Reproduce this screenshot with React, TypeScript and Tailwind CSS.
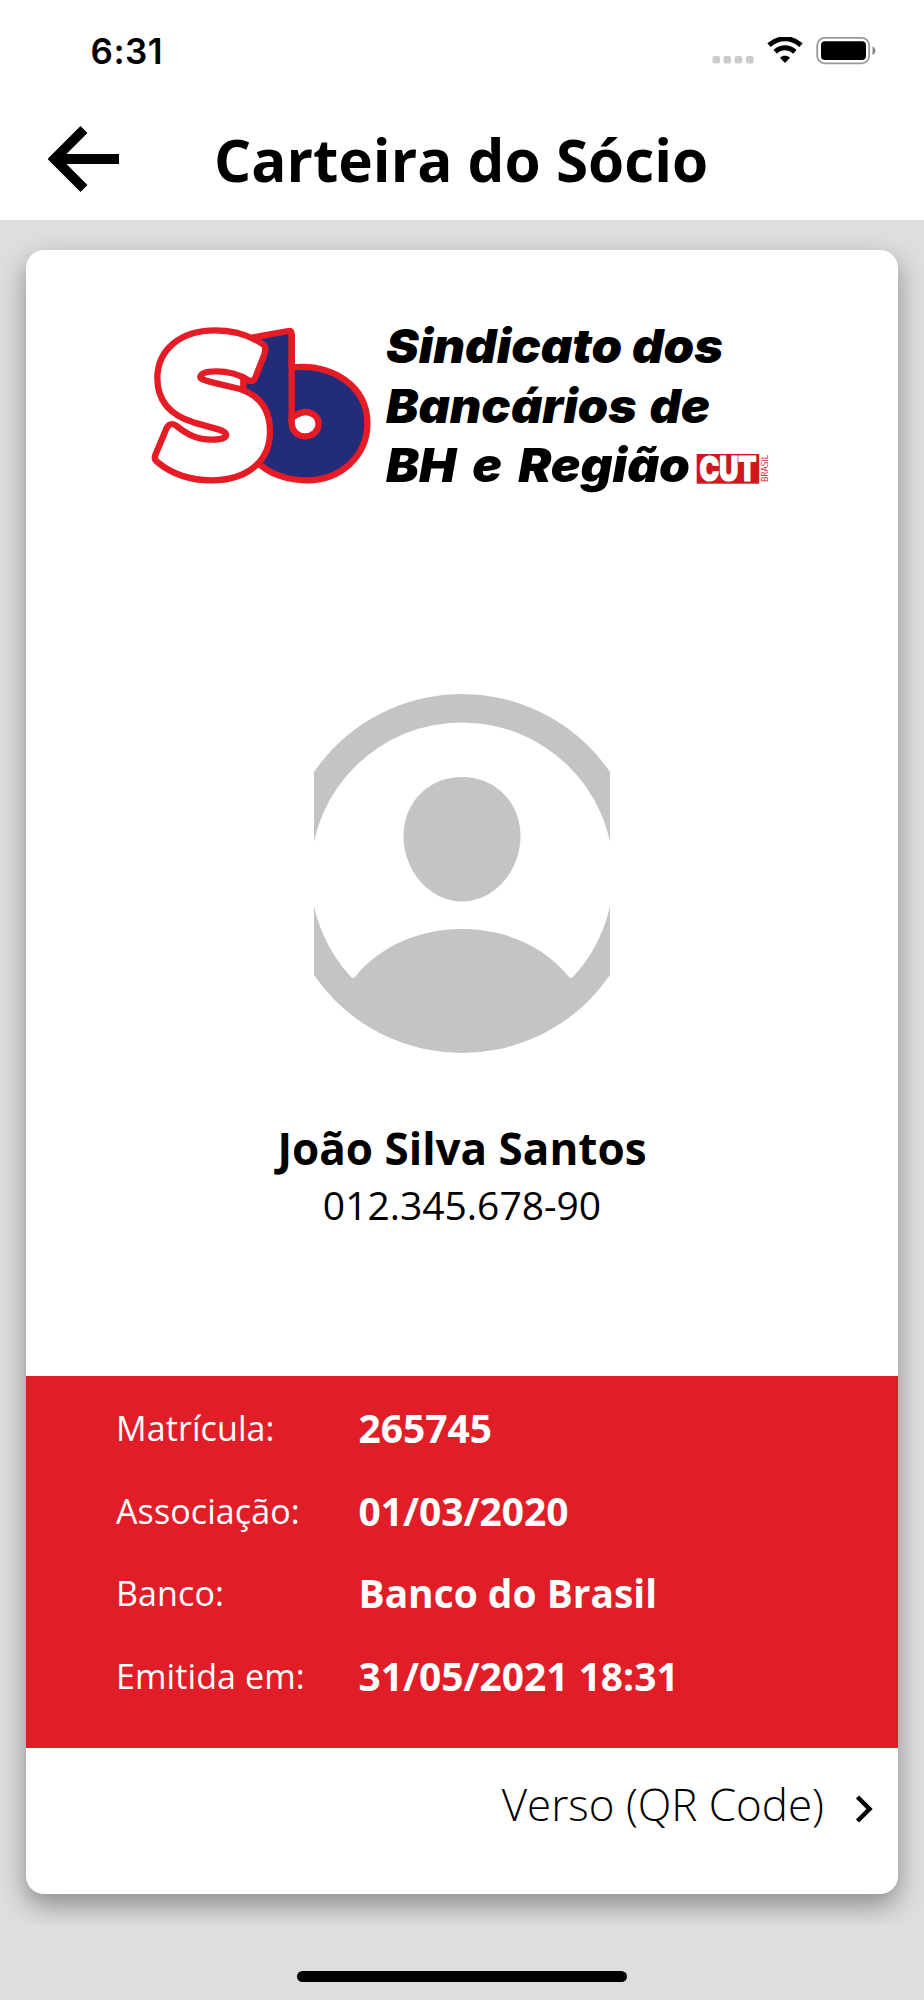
interface Field {
  label: string;
  value: string;
}

const fields: Field[] = [
  { label: 'Matrícula:', value: '265745' },
  { label: 'Associação:', value: '01/03/2020' },
  { label: 'Banco:', value: 'Banco do Brasil' },
  { label: 'Emitida em:', value: '31/05/2021 18:31' },
];

function StatusBar() {
  return (
    <div className="flex h-[100px] items-center justify-between pl-[90.5px] pr-[48px]">
      <span className="pt-px font-['Inter',sans-serif] text-[35px] leading-[40px] font-semibold tracking-[0.5px]">6:31</span>
      <svg width="164" height="28" viewBox="0 0 164 28" className="mt-[2px]">
        <g fill="#cbcbcb">
          <rect x="0.5" y="19" width="7.5" height="7.5" rx="2" />
          <rect x="11.5" y="19" width="7.5" height="7.5" rx="2" />
          <rect x="22.7" y="19" width="7.5" height="7.5" rx="2" />
          <rect x="34" y="19" width="7.5" height="7.5" rx="2" />
        </g>
        <g fill="none" stroke="#000" strokeWidth="5">
          <path d="M57 8.2C66.500 -0.400 79.500 -0.400 89 8.200" />
          <path d="M63.200 14.800C69 9.500 77 9.500 82.800 14.800" />
        </g>
        <path d="M68 20.800C71 18.200 75 18.200 78 20.800L73 26Z" />
        <rect x="105.200" y="0.900" width="52" height="25.500" rx="7.500" fill="none" stroke="#999" strokeWidth="1.800" />
        <rect x="109" y="4.300" width="45" height="18.800" rx="4" />
        <path d="M160.500 9.500C164.500 11 164.500 16.500 160.500 18Z" fill="#888" />
      </svg>
    </div>
  );
}

function Header() {
  return (
    <div className="flex h-[118px] items-center pl-[48px]">
      <svg width="71" height="66" viewBox="0 0 71 66" className="shrink-0">
        <path d="M36 3.500L6.500 33L36 62.500M7 33H71" fill="none" stroke="#000" strokeWidth="9.800" />
      </svg>
      <h1 className="mt-[2px] ml-[95px] text-[58.4px] leading-[80px] font-bold whitespace-nowrap">Carteira do Sócio</h1>
    </div>
  );
}

function Logo() {
  return (
    <svg width="640" height="190" viewBox="0 0 640 190">
      <g transform="scale(0.33333)" stroke="#e51b26" strokeWidth="19" strokeLinejoin="round">
        <path
          d="M310 240V150L340 82L445 63Q455 61 455 72V172C580 160 682 230 682 340C682 440 600 511 500 511C440 511 385 490 350 455Z"
          fill="#222c79"
        />
        <path
          d="M455 340C455 363 473 379 495 379C518 379 536 363 536 341C536 322 518 306 496 306C482 306 474 312 466 317L455 321Z"
          fill="#fff"
        />
        <path d="M455 72V340" fill="none" />
        <path
          d="M372 105C330 75 280 61 225 61C120 61 52 120 52 205C52 285 105 320 160 337L235 358C268 367 270 389 215 389C170 389 140 372 110 348C98 338 86 342 80 354L46 435C43 443 44 450 52 456C95 492 150 511 215 511C320 511 390 455 390 365C390 295 355 255 300 237L220 218C190 211 180 205 181 200C184 188 200 184 228 184C270 184 300 194 326 211C336 217 342 211 346 203L372 136C377 123 377 110 372 105Z"
          fill="#fff"
        />
      </g>
      <g
        fontFamily="Inter, sans-serif"
        fontWeight="900"
        fontStyle="italic"
        fontSize="47"
        fill="#000"
      >
        <text x="246" y="52.500" textLength="337" lengthAdjust="spacingAndGlyphs">Sindicato dos</text>
        <text x="246" y="112.500" textLength="324" lengthAdjust="spacingAndGlyphs" wordSpacing="3">Bancários de</text>
        <text x="246" y="171.500" textLength="304" lengthAdjust="spacingAndGlyphs" wordSpacing="6">BH e Região</text>
      </g>
      <rect x="556.700" y="144" width="62.500" height="29.700" fill="#d0181c" />
      <text
        x="559.500"
        y="171"
        textLength="57"
        lengthAdjust="spacingAndGlyphs"
        fontFamily="Inter, sans-serif"
        fontWeight="900"
        fontSize="34"
        fill="#fff"
        stroke="#fff"
        strokeWidth="1.200"
      >
        CUT
      </text>
      <text
        transform="translate(628 172) rotate(-90)"
        textLength="27"
        lengthAdjust="spacingAndGlyphs"
        fontFamily="Open Sans, sans-serif"
        fontSize="8.500"
        fill="#d0181c"
      >
        BRASIL
      </text>
    </svg>
  );
}

function Avatar() {
  return (
    <svg width="296" height="360" viewBox="314 694 296 360">
      <circle cx="462" cy="873.500" r="179.500" fill="#c4c4c4" />
      <path
        d="M351 977A151.500 151.500 0 1 1 573 977Q571 979 569 977C544 946 505 929 462 929C419 929 380 946 355 977Q353 979 351 977Z"
        fill="#fff"
      />
      <path
        d="M462 777C496 777 520.500 803 520.500 836C520.500 871 494 901.500 462 901.500C430 901.500 403.500 871 403.500 836C403.500 803 428 777 462 777Z"
        fill="#c4c4c4"
      />
    </svg>
  );
}

export default function App() {
  return (
    <div className="flex h-[2000px] w-[924px] flex-col bg-[#dedede] font-['Open_Sans',sans-serif] text-black">
      <div className="h-[220px] shrink-0 bg-white">
        <StatusBar />
        <Header />
      </div>

      <main className="h-[1704px] shrink-0 overflow-hidden px-[26px] pt-[30px]">
        <div className="flex h-[1644px] flex-col rounded-[18px] bg-white shadow-[0_11px_27px_rgba(0,0,0,0.38)]">
          <div className="flex h-[1126px] flex-col pt-[60px]">
            <div className="pl-[114px]">
              <Logo />
            </div>
            <div className="mt-[194px] flex justify-center">
              <Avatar />
            </div>
            <p className="mt-[66px] text-center text-[44px] leading-[56px] font-bold">João Silva Santos</p>
            <p className="text-center text-[39px] leading-[57px]">012.345.678-90</p>
          </div>

          <div className="h-[372px] bg-[#e11e27] pt-[10.4px] pl-[90px] text-white">
            {fields.map((field) => (
              <div key={field.label} className="flex h-[82.8px] items-center">
                <span className="w-[242.5px] text-[34px] leading-[60px] tracking-[0.1px]">{field.label}</span>
                <span className="text-[38.9px] leading-[60px] font-bold">{field.value}</span>
              </div>
            ))}
          </div>

          <div className="flex h-[112px] items-center justify-end pr-[25px]">
            <span className="text-[43.9px] leading-[60px] font-light">Verso (QR Code)</span>
            <svg width="18" height="30" viewBox="0 0 18 30" className="mt-[9px] ml-[31px]">
              <path d="M2.500 3L14.500 15L2.500 27" fill="none" stroke="#000" strokeWidth="4.500" />
            </svg>
          </div>
        </div>
      </main>

      <div className="flex justify-center pt-[47px]">
        <div className="h-[11px] w-[330px] rounded-full bg-black" />
      </div>
    </div>
  );
}
